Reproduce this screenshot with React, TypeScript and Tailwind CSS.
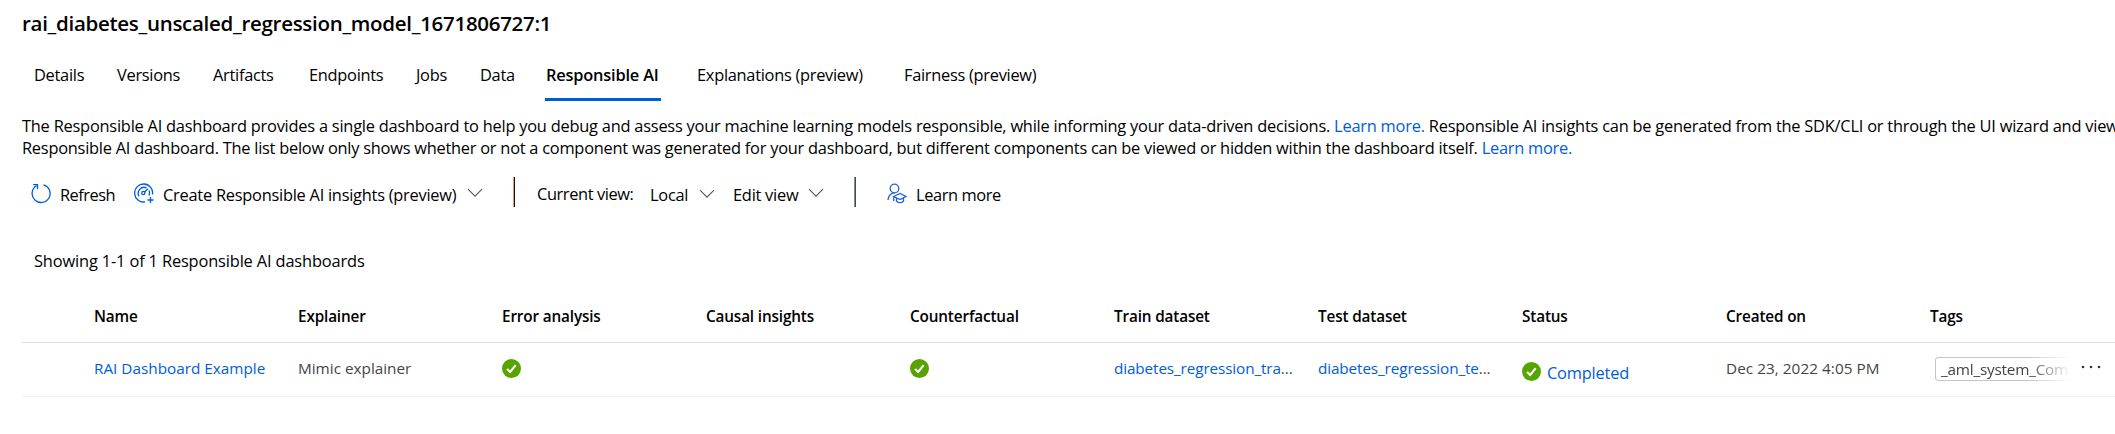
import React from "react";

const blue = "text-[#015cda]";

function Chevron({ className = "" }: { className?: string }) {
  return (
    <svg className={"shrink-0 " + className} width="16" height="10" viewBox="0 0 16 10" fill="none" stroke="#555" strokeWidth="1.1">
      <path d="M1 1.2 8 8.2 15 1.2" />
    </svg>
  );
}

function Check({ size }: { size: number }) {
  return (
    <svg className="shrink-0" width={size} height={size} viewBox="0 0 20 20">
      <circle cx="10" cy="10" r="10" fill="#57a300" />
      <path d="M5.3 10.4 8.6 13.6 14.4 6.4" fill="none" stroke="#fff" strokeWidth="2.2" />
    </svg>
  );
}

const tabs = [
  { label: "Details", box: "w-[83px]" },
  { label: "Versions", box: "w-[96px]" },
  { label: "Artifacts", box: "w-[96px]" },
  { label: "Endpoints", box: "w-[107px]" },
  { label: "Jobs", box: "w-[64px]" },
  { label: "Data", box: "w-[66px]" },
  { label: "Responsible AI", box: "w-[151px]", active: true },
  { label: "Explanations (preview)", box: "w-[207px]" },
  { label: "Fairness (preview)", box: "w-[160px]" },
];

const headers = ["Name", "Explainer", "Error analysis", "Causal insights", "Counterfactual", "Train dataset", "Test dataset", "Status", "Created on", "Tags"];

export default function App() {
  return (
    <div className="h-[434px] w-[2115px] overflow-hidden bg-white font-['Open_Sans',sans-serif] text-[16.4px] leading-[22px] whitespace-nowrap text-black">
      <h1 className="h-[58px] pt-[9px] pl-[22px] text-[20.5px] leading-[28px] font-semibold tracking-[-0.29px]">
        <span>rai_diabetes_unscaled_regression_model_1671806727:1</span>
      </h1>
      <nav className="flex h-[44px] pl-[34px] tracking-[-0.28px]">
        {tabs.map((t) => (
          <div key={t.label} className={"shrink-0 pt-[6px] " + t.box}>
            {t.active ? (
              <div className="-ml-[1px] h-[37px] w-[116px] border-b-[3px] border-[#015cda] pl-[1px] font-semibold tracking-[-0.2px]">
                <span>{t.label}</span>
              </div>
            ) : (
              <span>{t.label}</span>
            )}
          </div>
        ))}
      </nav>
      <div className="h-[75px] pt-[13px] pl-[22px]">
        <p className="tracking-[-0.228px]">
          <span>The Responsible AI dashboard provides a single dashboard to help you debug and assess your machine learning models responsible, while informing your data-driven decisions. <a className={blue}>Learn more.</a> Responsible AI insights can be generated from the SDK/CLI or through the UI wizard and view</span>
        </p>
        <p className="tracking-[-0.247px]">
          <span>Responsible AI dashboard. The list below only shows whether or not a component was generated for your dashboard, but different components can be viewed or hidden within the dashboard itself. <a className={blue}>Learn more.</a></span>
        </p>
      </div>
      <div className="flex h-[30px] items-center pl-[31px] tracking-[-0.25px]">
        <div className="flex w-[103px] items-center">
          <svg className="mt-[2px] mr-[9px]" width="20" height="21" viewBox="0 0 20 21" fill="none" stroke="#015cda" strokeWidth="1.3">
            <path d="M12.5 1.8A9 9 0 1 1 5.4 2.8M2.2 1.6h4.3v4.6" />
          </svg>
          <span className="pt-[6px] tracking-[-0.5px]">Refresh</span>
        </div>
        <div className="flex w-[379px] items-center">
          <svg className="mt-[2px] mr-[9px]" width="20" height="21" viewBox="0 0 20 21" fill="none" stroke="#015cda" strokeWidth="1.3">
            <path d="M18.5 11.500A9 9 0 1 0 11 18.900M15 12.500A6 6 0 0 0 15 7.500M12.500 4.800A6 6 0 0 0 5 13.300M14 5.800 10.300 9.200M16.500 14v6M13.5 17h6" />
            <circle cx="9.3" cy="10" r="1.6" />
          </svg>
          <span className="w-[304px] pt-[6px]">Create Responsible AI insights (preview)</span>
          <Chevron className="mt-[2px]" />
        </div>
        <div className="h-[30px] w-[2px] border-l border-[#e89b60] bg-[#10102a]" />
        <div className="flex w-[340px] items-center pl-[22px]">
          <span className="w-[113px] pt-[4px] tracking-[-0.4px]">Current view:</span>
          <span className="w-[49px] pt-[6px]">Local</span>
          <Chevron className="mt-[4px]" />
          <span className="ml-[18px] w-[75px] pt-[6px]">Edit view</span>
          <Chevron className="mt-[2px]" />
        </div>
        <div className="-ml-[1px] h-[30px] w-[2px] border-l border-[#c08040] bg-[#0a5a98]" />
        <div className="flex items-center pl-[31px]">
          <svg className="mt-[2px] mr-[9px]" width="20" height="21" viewBox="0 0 20 21" fill="none" stroke="#2160dd" strokeWidth="1.3">
            <circle cx="7.5" cy="5.5" r="4.3" />
            <path d="M1 17c.4-4 2.700-6.800 6.500-7.200M6.500 13.500 13 10.500l6 3-6 3zM9.500 15v3.300c2 1.600 5 1.600 7 0V15M6.700 13.500V18" />
          </svg>
          <span className="pt-[6px] tracking-[-0.4px]">Learn more</span>
        </div>
      </div>
      <div className="h-[83px] pt-[43px] pl-[34px] tracking-[-0.15px]">
        <span>Showing 1-1 of 1 Responsible AI dashboards</span>
      </div>
      <div className="ml-[22px] text-[15.3px]">
        <div className="flex h-[53px] border-b border-[#e1dfdd] pt-[15px] pl-[72px] font-semibold tracking-[-0.15px]">
          {headers.map((h) => (
            <div key={h} className="w-[204px] shrink-0">
              <span>{h}</span>
            </div>
          ))}
        </div>
        <div className="flex h-[54px] border-b border-[#f0efee] pt-[14px] pl-[72px] text-[#444]">
          <div className={"w-[204px] shrink-0 " + blue}><span>RAI Dashboard Example</span></div>
          <div className="w-[204px] shrink-0"><span>Mimic explainer</span></div>
          <div className="w-[408px] shrink-0 pt-[2px]"><Check size={19} /></div>
          <div className="w-[204px] shrink-0 pt-[2px]"><Check size={19} /></div>
          <div className="w-[204px] shrink-0 tracking-[-0.12px]"><span className={blue}>diabetes_regression_tra</span>...</div>
          <div className="w-[204px] shrink-0 tracking-[-0.12px]"><span className={blue}>diabetes_regression_te</span>...</div>
          <div className={"flex w-[204px] shrink-0 items-start text-[16.4px] tracking-[-0.2px] " + blue}>
            <div className="mt-[5px] mr-[6px]"><Check size={19} /></div>
            <span className="pt-[5px]">Completed</span>
          </div>
          <div className="w-[204px] shrink-0 tracking-[0.05px]"><span>Dec 23, 2022 4:05 PM</span></div>
          <div className="flex w-[185px] shrink-0 items-start pl-[5px]">
            <div className="h-[24px] w-[136px] overflow-hidden rounded-l-[3px] border border-r-0 border-[#c8c6c4] pl-[5px] [mask-image:linear-gradient(to_right,black_68%,transparent)]">
              <span className="tracking-[-0.2px]">_aml_system_Com</span>
            </div>
            <svg className="mt-[8px] ml-[10px]" width="20" height="4" viewBox="0 0 20 4" fill="#333">
              <circle cx="2" cy="2" r="1.300" /><circle cx="10" cy="2" r="1.300" /><circle cx="18" cy="2" r="1.300" />
            </svg>
          </div>
        </div>
      </div>
    </div>
  );
}
